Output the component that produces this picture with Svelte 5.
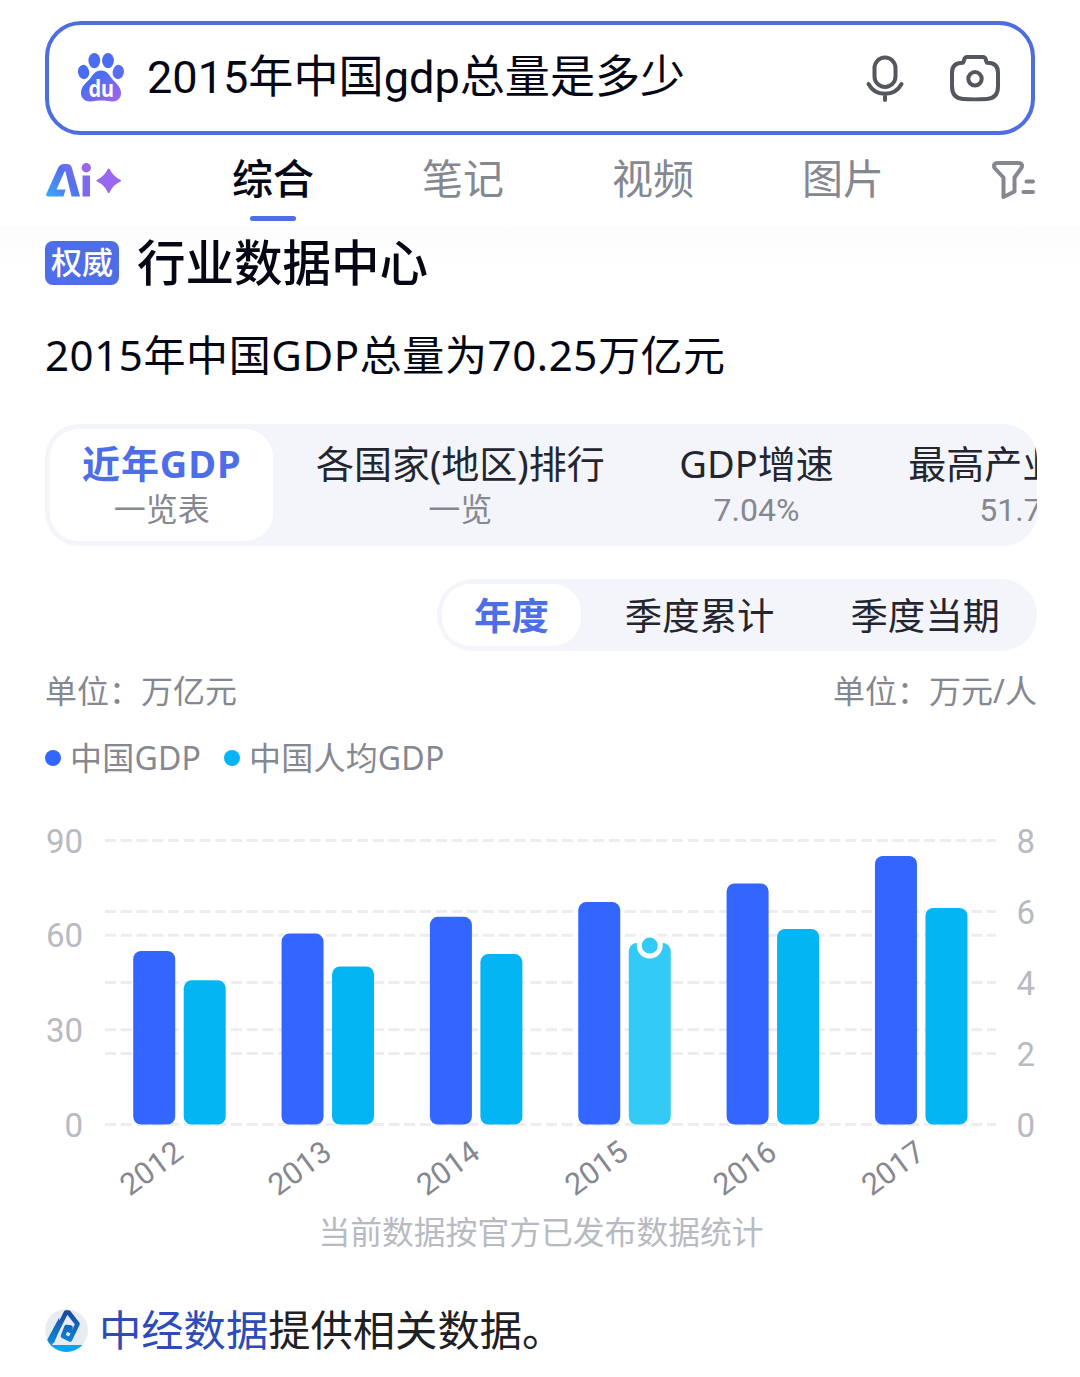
<script lang="ts">
	const channels = ['综合', '笔记', '视频', '图片'];

	const topics = [
		{ title: '近年GDP', sub: '一览表' },
		{ title: '各国家(地区)排行', sub: '一览' },
		{ title: 'GDP增速', sub: '7.04%' },
		{ title: '最高产业占比', sub: '51.7%' }
	];

	const periods = ['年度', '季度累计', '季度当期'];

	const rows = [
		{ year: 2012, gdp: 55.0, perCapita: 4.06 },
		{ year: 2013, gdp: 60.5, perCapita: 4.45 },
		{ year: 2014, gdp: 65.8, perCapita: 4.8 },
		{ year: 2015, gdp: 70.5, perCapita: 5.11 },
		{ year: 2016, gdp: 76.4, perCapita: 5.51 },
		{ year: 2017, gdp: 85.1, perCapita: 6.1 }
	];

	let channel = $state(0);
	let topic = $state(0);
	let period = $state(0);
	let selectedYear = $state(2015);

	// plot area inside the svg
	const left = 60;
	const right = 951;
	const top = 40.5;
	const base = 324.5;
	const step = 148.35;
	const barWidth = 42;

	const yGdp = (v: number) => base - (v / 90) * (base - top);
	const yCap = (v: number) => base - (v / 8) * (base - top);
</script>

<div class="page">
	<header>
		<div class="search">
			<svg class="paw" viewBox="0 0 48 50" width="48" height="50">
				<defs>
					<linearGradient id="paw" x1="0" y1="0" x2="1" y2="1">
						<stop offset="0.3" stop-color="#4a6cf0" />
						<stop offset="1" stop-color="#a465f0" />
					</linearGradient>
				</defs>
				<ellipse cx="17.3" cy="7.6" rx="5.9" ry="7.6" fill="#4a6cf0" />
				<ellipse cx="31" cy="7.6" rx="5.9" ry="7.6" fill="#4a6cf0" />
				<ellipse cx="6.6" cy="19" rx="5.6" ry="7.2" transform="rotate(-10 6.6 19)" fill="#4a6cf0" />
				<ellipse cx="41.3" cy="19" rx="5.6" ry="7.2" transform="rotate(10 41.3 19)" fill="#5a6cf0" />
				<path d="M24 17.5c5 0 7.5 3 10.5 7.5 3 4.500 9.500 7.500 9.500 15 0 5.500-3.500 8.500-8.500 8.500-4 0-6-1-11.500-1s-7 1-11 1C8 48.500 4 45.500 4 40c0-7.500 6-10.500 9.500-15 3-4.500 5.500-7.500 10.500-7.500z" fill="url(#paw)" />
				<text x="11.5" y="43.5" textLength="25.5" lengthAdjust="spacingAndGlyphs" class="du">du</text>
			</svg>
			<span class="query">2015年中国gdp总量是多少</span>
			<svg class="mic" viewBox="0 0 40 50" width="40" height="50" fill="none" stroke="#55575f" stroke-width="4" stroke-linecap="round">
				<rect x="9.5" y="4.5" width="21" height="29.5" rx="10.5" />
				<path d="M3.500 31c3.500 6.500 9.500 9.800 16.500 9.800s13-3.300 16.500-9.800M20 41v6" />
			</svg>
			<svg class="camera" viewBox="0 0 52 50" width="52" height="50" fill="none" stroke="#55575f" stroke-width="4" stroke-linecap="round" stroke-linejoin="round">
				<path d="M13.500 9.800C14.800 9.800 14.700 8 15.200 6.500 15.700 4.700 16.500 4 18.300 4h15.400c1.800 0 2.600.7 3.100 2.500.5 1.500.4 3.300 1.700 3.300 7 0 10.500 3 10.500 10v13.500c0 8-3.500 12.200-11 12.700-8 .5-16 .5-24 0C6.500 45.500 3 41.300 3 33.300V19.800c0-7 3.500-10 10.500-10z" />
				<circle cx="26" cy="25.8" r="6.7" />
			</svg>
		</div>

		<nav>
			<svg class="ai" viewBox="0 0 76 36" width="76" height="36">
				<defs>
					<linearGradient id="ai" gradientUnits="userSpaceOnUse" x1="2" y1="34" x2="44" y2="0">
						<stop offset="0" stop-color="#38aaf5" />
						<stop offset="0.5" stop-color="#5470ee" />
						<stop offset="1" stop-color="#a468ee" />
					</linearGradient>
				</defs>
				<path d="M1.500 30.500 13 5q2-4 6-4h3q4 0 5 4l8 28.500H26.500L20.500 8.500h-1L11.500 26.500h9l-2 7H4q-4 0-2.500-3z" fill="url(#ai)" />
				<path d="M41.300 12.500v21" fill="none" stroke="#7b69ee" stroke-width="7.5" />
				<circle cx="41.3" cy="4.7" r="4.7" fill="#9568ee" />
				<path d="M63.700 6.500Q67.200 14.200 75 17.700 67.200 21.200 63.700 29 60.200 21.200 52.500 17.700 60.200 14.200 63.700 6.500z" fill="#9a68f0" stroke="#9a68f0" stroke-width="2" stroke-linejoin="round" />
			</svg>
			{#each channels as name, i}
				<button class="channel" class:active={channel === i} onclick={() => (channel = i)}>{name}</button>
			{/each}
			<svg class="filter" viewBox="0 0 44 40" width="44" height="40" fill="none" stroke="#858890" stroke-width="4" stroke-linecap="round" stroke-linejoin="round">
				<path d="M6.500 3h21c3.500 0 4.500 3 2.500 5.500l-6.500 9V31.500L12.500 37V17.500L4 8.500C2 6 3 3 6.500 3z" />
				<path d="M35.500 21.500H42M32.500 32H42" />
			</svg>
		</nav>
	</header>

	<main>
		<h1><span class="badge">权威</span>行业数据中心</h1>
		<p class="answer">2015年中国GDP总量为70.25万亿元</p>

		<div class="topics">
			{#each topics as t, i}
				<button class="topic" class:active={topic === i} onclick={() => (topic = i)}>
					<span class="name">{t.title}</span>
					<span class="sub">{t.sub}</span>
				</button>
			{/each}
		</div>

		<div class="periods">
			{#each periods as p, i}
				<button class="period" class:active={period === i} onclick={() => (period = i)}>{p}</button>
			{/each}
		</div>

		<div class="units">
			<span>单位：万亿元</span>
			<span>单位：万元/人</span>
		</div>

		<div class="legend">
			<span class="dot gdp"></span><span class="label">中国GDP</span>
			<span class="dot capita"></span><span class="label">中国人均GDP</span>
		</div>

		<svg class="chart" viewBox="0 0 992 410" width="992" height="410">
			{#each [0, 30, 60, 90] as v}
				<line x1={left} x2={right} y1={yGdp(v)} y2={yGdp(v)} class="grid" />
				<text x="38" y={yGdp(v) + 12} class="tick" text-anchor="end">{v}</text>
			{/each}
			{#each [0, 2, 4, 6, 8] as v}
				{#if v % 8 !== 0}
					<line x1={left} x2={right} y1={yCap(v)} y2={yCap(v)} class="grid" />
				{/if}
				<text x="990" y={yCap(v) + 12} class="tick" text-anchor="end">{v}</text>
			{/each}

			{#each rows as r, i}
				{@const x = 88.2 + i * step}
				<rect {x} y={yGdp(r.gdp)} width={barWidth} height={base - yGdp(r.gdp)} rx="8" fill="#3366ff" />
				<rect
					x={x + 50.5}
					y={yCap(r.perCapita)}
					width={barWidth}
					height={base - yCap(r.perCapita)}
					rx="8"
					fill={r.year === selectedYear ? '#33caf5' : '#03b5f3'}
				/>
				{#if r.year === selectedYear}
					<circle cx={x + 71.5} cy={yCap(r.perCapita) + 2.5} r="10.5" fill="#33caf5" stroke="#fff" stroke-width="5" />
				{/if}
				<text transform="translate({x + 52} {base + 32}) rotate(-36)" text-anchor="end" class="year">{r.year}</text>
			{/each}
		</svg>

		<p class="note">当前数据按官方已发布数据统计</p>

		<footer>
			<svg viewBox="0 0 43 43" width="43" height="43">
				<defs>
					<linearGradient id="src" gradientUnits="userSpaceOnUse" x1="0" y1="0" x2="0" y2="40">
						<stop offset="0" stop-color="#1b429c" />
						<stop offset="1" stop-color="#0897e2" />
					</linearGradient>
					<clipPath id="disc"><circle cx="21.5" cy="21.5" r="21.5" /></clipPath>
				</defs>
				<g clip-path="url(#disc)">
					<rect width="43" height="43" fill="#e9ebf3" />
					<path d="M4.500 36 21 3.500h2.500L32.500 15 25 30.500 18 27 21.500 18 25.500 18.500 23.500 23.500" fill="none" stroke="url(#src)" stroke-width="4.6" stroke-linejoin="round" />
					<path d="M1 33 14 9l2 8-7 17z" fill="url(#src)" />
					<rect y="36" width="43" height="7" fill="#08a5ee" />
				</g>
			</svg>
			<span><a href="#source">中经数据</a>提供相关数据。</span>
		</footer>
	</main>
</div>

<style>
	:global(body) {
		margin: 0;
		background: #fff;
	}

	.page {
		width: 1080px;
		height: 1377px;
		overflow: hidden;
		box-sizing: border-box;
		color: #050714;
		font-family: "Noto Sans", "Noto Sans CJK SC", sans-serif;
	}

	button {
		padding: 0;
		border: 0;
		background: none;
		color: inherit;
		font: inherit;
		white-space: nowrap;
	}

	svg {
		display: block;
		flex: none;
	}

	header {
		height: 227px;
		padding: 21px 45px 0;
		box-sizing: border-box;
	}

	.search {
		display: flex;
		align-items: center;
		height: 114px;
		box-sizing: border-box;
		padding: 0 30px 0 28px;
		border: 4px solid #4e6ee0;
		border-radius: 36px;
	}

	.query {
		flex: 1;
		margin: 0 0 1px 22px;
		font-family: Roboto, "Noto Sans CJK SC", sans-serif;
		font-size: 45.1px;
		line-height: 60px;
	}

	.du {
		font: bold 23px "Noto Sans", sans-serif;
		fill: #fff;
	}

	.camera {
		margin-left: 44px;
	}

	nav {
		display: flex;
		height: 92px;
		color: #858890;
		font-size: 41px;
	}

	.ai {
		margin-top: 28px;
	}

	.channel {
		position: relative;
		width: 190px;
		height: 86px;
		line-height: 83px;
	}

	.ai + .channel {
		margin-left: 57px;
	}

	.channel.active {
		color: #050714;
		font-weight: 500;
	}

	.channel.active::after {
		content: "";
		position: absolute;
		left: 72px;
		bottom: 0;
		width: 46px;
		height: 5px;
		border-radius: 3px;
		background: #4e6ee8;
	}

	.filter {
		margin: 25px 0 0 53px;
	}

	main {
		padding: 0 43px 0 45px;
		background: linear-gradient(#fcfcfe, #fff 40px);
	}

	h1 {
		display: flex;
		align-items: center;
		margin: 0;
		height: 70px;
		font-size: 48.5px;
		font-weight: 500;
		line-height: 68px;
	}

	.badge {
		width: 74px;
		height: 44px;
		margin: 2px 18px 0 0;
		border-radius: 8px;
		background: #4e6ee8;
		color: #fff;
		font-size: 31px;
		line-height: 43px;
		text-align: center;
	}

	.answer {
		margin: 28px 0 0;
		font-size: 42px;
		line-height: 60px;
		letter-spacing: 0.6px;
	}

	.topics {
		display: flex;
		gap: 10.5px;
		height: 122px;
		margin-top: 39px;
		padding: 5px;
		box-sizing: border-box;
		overflow: hidden;
		border-radius: 34px;
		background: #f4f5fa;
	}

	.topic {
		display: flex;
		flex: none;
		flex-direction: column;
		align-items: center;
		padding: 11px 32px 0;
		border-radius: 28px;
	}

	.name {
		color: #24262f;
		font-size: 38px;
		line-height: 46px;
	}

	.sub {
		color: #858890;
		font-family: Roboto, "Noto Sans CJK SC", sans-serif;
		font-size: 32px;
		line-height: 49px;
	}

	.topic.active,
	.period.active {
		background: #fff;
	}

	.topic.active .name,
	.period.active {
		color: #4e6ee8;
		font-weight: 700;
	}

	.topic.active .name {
		letter-spacing: 0.9px;
	}

	.periods {
		display: flex;
		gap: 12px;
		width: max-content;
		height: 72px;
		margin: 33px 0 0 auto;
		padding: 5px;
		box-sizing: border-box;
		border-radius: 36px;
		background: #f4f5fa;
		color: #24262f;
		font-size: 37.4px;
	}

	.period {
		padding: 0 32px;
		border-radius: 28px;
		line-height: 59px;
	}

	.units,
	.legend {
		display: flex;
		color: #858890;
		font-size: 32px;
		line-height: 46px;
	}

	.units {
		justify-content: space-between;
		margin-top: 17px;
	}

	.legend {
		align-items: center;
		margin-top: 21px;
		letter-spacing: 0.2px;
	}

	.dot {
		width: 16px;
		height: 16px;
		margin-right: 9px;
		border-radius: 50%;
	}

	.gdp {
		background: #3366ff;
	}

	.capita {
		margin-left: 23px;
		background: #03b5f3;
	}

	.chart {
		margin-top: 19px;
	}

	.grid {
		stroke: #ededf0;
		stroke-width: 3;
		stroke-dasharray: 11 4.75;
	}

	.tick {
		fill: #b8bac2;
		font-family: Roboto, sans-serif;
		font-size: 33px;
	}

	.year {
		fill: #858890;
		font-family: Roboto, sans-serif;
		font-size: 30.5px;
	}

	.note {
		margin: 0;
		color: #b8bac2;
		font-size: 31.8px;
		line-height: 44px;
		text-align: center;
	}

	footer {
		display: flex;
		align-items: center;
		gap: 11px;
		height: 60px;
		margin-top: 46px;
		color: #1f2024;
		font-size: 42.3px;
		line-height: 60px;
	}

	footer a {
		color: #2d4cb8;
		text-decoration: none;
	}
</style>
